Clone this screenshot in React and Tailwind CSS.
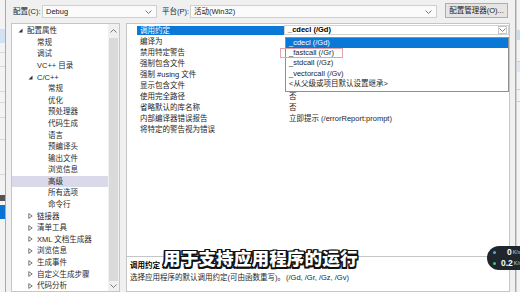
import React from "react";

const ui = "font-['Liberation_Sans','Noto_Sans_CJK_SC',sans-serif] text-[7.5px]";

const tree = [
  { t: "配置属性", lvl: 0, tri: "open" },
  { t: "常规", lvl: 1 },
  { t: "调试", lvl: 1 },
  { t: "VC++ 目录", lvl: 1 },
  { t: "C/C++", lvl: 1, tri: "open" },
  { t: "常规", lvl: 2 },
  { t: "优化", lvl: 2 },
  { t: "预处理器", lvl: 2 },
  { t: "代码生成", lvl: 2 },
  { t: "语言", lvl: 2 },
  { t: "预编译头", lvl: 2 },
  { t: "输出文件", lvl: 2 },
  { t: "浏览信息", lvl: 2 },
  { t: "高级", lvl: 2, sel: true },
  { t: "所有选项", lvl: 2 },
  { t: "命令行", lvl: 2 },
  { t: "链接器", lvl: 1, tri: "closed" },
  { t: "清单工具", lvl: 1, tri: "closed" },
  { t: "XML 文档生成器", lvl: 1, tri: "closed" },
  { t: "浏览信息", lvl: 1, tri: "closed" },
  { t: "生成事件", lvl: 1, tri: "closed" },
  { t: "自定义生成步骤", lvl: 1, tri: "closed" },
  { t: "代码分析", lvl: 1, tri: "closed" },
];

const indent = { 0: "pl-[6px]", 1: "pl-[16px]", 2: "pl-[27px]" };

const props = [
  ["调用约定", null],
  ["编译为", ""],
  ["禁用特定警告", ""],
  ["强制包含文件", ""],
  ["强制 #using 文件", ""],
  ["显示包含文件", ""],
  ["使用完全路径", "否"],
  ["省略默认的库名称", "否"],
  ["内部编译器错误报告", "立即提示 (/errorReport:prompt)"],
  ["将特定的警告视为错误", ""],
];

const options = ["_cdecl (/Gd)", "_fastcall (/Gr)", "_stdcall (/Gz)", "_vectorcall (/Gv)", "<从父级或项目默认设置继承>"];

function Chevron({ up = false, className = "" }) {
  return (
    <svg width="7" height="4" viewBox="0 0 7 4" className={className}>
      <path d={up ? "M0.5 3.5 L3.5 0.5 L6.5 3.5" : "M0.5 0.5 L3.5 3.5 L6.5 0.5"} fill="none" stroke="#6b6b6b" strokeWidth="0.9" />
    </svg>
  );
}

function Triangle({ kind }) {
  if (kind === "open")
    return (
      <svg width="5" height="5" viewBox="0 0 5 5">
        <path d="M4.5 0.5 L4.5 4.5 L0.5 4.5 Z" fill="#333" />
      </svg>
    );
  if (kind === "closed")
    return (
      <svg width="5" height="6" viewBox="0 0 5 6">
        <path d="M0.8 0.6 L4.2 3 L0.8 5.4 Z" fill="none" stroke="#555" strokeWidth="0.8" />
      </svg>
    );
  return null;
}

function Combo({ text, className }) {
  return (
    <div className={`h-[13px] bg-[#fbfbfb] border border-[#cfcfcf] flex items-center pl-[3px] pr-[4px] ${className}`}>
      <span className="flex-1 text-[#222]">{text}</span>
      <Chevron />
    </div>
  );
}

export default function App() {
  return (
    <div className={`w-[520px] h-[292px] overflow-hidden relative flex bg-[#f0f0f0] text-[#1e1e1e] ${ui}`}>
      {/* window behind, left edge */}
      <div className="w-[5px] flex flex-col bg-[#f3f3f3]">
        <div className="h-[29px]" />
        <div className="h-[14px] bg-[#d3e2f3]" />
        <div className="h-[10px] border-b border-[#d8d8d8]" />
        <div className="h-[14px] border-b border-[#d8d8d8]" />
        <div className="h-[25px] border-b border-[#d8d8d8]" />
        <div className="h-[11px] border-b border-[#d8d8d8]" />
        <div className="h-[15px] border-b border-[#d8d8d8]" />
        <div className="h-[22px] border-b border-[#d8d8d8]" />
        <div className="h-[35px] border-b border-[#d8d8d8]" />
        <div className="h-[20px]" />
        <div className="h-[6px] bg-[#555]" />
        <div className="h-[4px]" />
        <div className="h-[14px] bg-[#0a74d4]" />
        <div className="flex-1" />
      </div>

      {/* property dialog */}
      <div className="flex-1 flex flex-col border-x border-[#a9a9a9] pl-[5px] pr-[5px]">
        <div className="h-[23px] flex items-center pl-[2px]">
          <span className="w-[29px]">配置(C):</span>
          <Combo text="Debug" className="w-[115px]" />
          <span className="w-[28px] ml-[5px]">平台(P):</span>
          <Combo text="活动(Win32)" className="w-[247px]" />
          <div className="ml-[8px] w-[63px] h-[15px] -mt-[2px] border border-[#adadad] bg-[#e5e5e5] flex items-center justify-center">
            配置管理器(O)...
          </div>
        </div>

        <div className="flex-1 flex gap-[6px] min-h-0">
          {/* configuration tree */}
          <div className="w-[109px] bg-white border border-[#c6c6c6] flex">
            <div className="flex-1 pt-[1px]">
              {tree.map((n, i) => (
                <div
                  key={i}
                  className={`h-[11.6px] flex items-center ${indent[n.lvl]} ${n.sel ? "bg-[#d9d9ea]" : ""}`}
                >
                  <span className="w-[9px] flex items-center">
                    <Triangle kind={n.tri} />
                  </span>
                  <span className="text-[#2a2a2a] whitespace-nowrap">{n.t}</span>
                </div>
              ))}
            </div>
            <div className="w-[11px] flex flex-col bg-[#f0f0f0]">
              <div className="h-[14px] flex items-center justify-center">
                <Chevron up />
              </div>
              <div className="flex-1 mx-[1px] bg-[#dadada]" />
              <div className="h-[10px] flex items-center justify-center">
                <Chevron />
              </div>
            </div>
          </div>

          {/* property grid + description */}
          <div className="flex-1 flex flex-col">
            <div className="h-[234px] bg-white border border-[#c6c6c6] pt-[1px] pl-[10px]">
              {props.map(([name, value], i) => (
                <div key={i} className="h-[11px] flex">
                  <div className="w-[147px] flex items-center">
                    <div
                      className={`h-[9px] w-full flex items-center pl-[3px] whitespace-nowrap ${
                        i === 0 ? "bg-[#0a78d7] text-white" : "text-[#1e1e1e]"
                      }`}
                    >
                      {name}
                    </div>
                  </div>
                  <div className="flex-1 relative flex items-center pl-[5px]">
                    {value === null ? (
                      <>
                        <div className="absolute left-0 right-0 top-[0px] h-[10px] bg-white border border-[#d2d2d2] flex items-center pl-[3px] pr-[1px]">
                          <span className="flex-1 font-bold text-black">_cdecl (/Gd)</span>
                          <span className="w-[9px] h-[8px] border border-[#c8c8c8] flex items-center justify-center">
                            <Chevron />
                          </span>
                        </div>
                        <div className="absolute left-[1px] right-0 top-[11.5px] z-10 bg-white border border-[#8f8f8f] pb-[3px]">
                          {options.map((o, k) => (
                            <div
                              key={k}
                              className={`h-[10.2px] flex items-center pl-[3px] ${k === 0 ? "bg-[#0a78d7] text-white" : "text-[#1e1e1e]"}`}
                            >
                              {o}
                            </div>
                          ))}
                          <div className="absolute left-[-6px] top-[10.5px] w-[63px] h-[10px] border border-[#e3a3ab]" />
                        </div>
                      </>
                    ) : (
                      <span className="text-[#1e1e1e]">{value}</span>
                    )}
                  </div>
                </div>
              ))}
            </div>
            <div className="flex-1 bg-white border-x border-b border-[#c6c6c6] pt-[3px] pl-[3px] leading-[12px]">
              <div className="font-bold text-black">调用约定</div>
              <div className="flex text-[#1e1e1e]">
                <span className="w-[156px]">选择应用程序的默认调用约定(可由函数重写)。</span>
                <span>(/Gd, /Gr, /Gz, /Gv)</span>
              </div>
            </div>
          </div>
        </div>
      </div>

      {/* window behind, right edge */}
      <div className="w-[4px] flex flex-col bg-[#f3f3f3] border-l border-[#d0d0d0]">
        <div className="h-[30px]" />
        <div className="h-[10px] bg-[#c9dcf1]" />
        <div className="h-[22px] border-b border-[#cfcfcf]" />
        <div className="h-[10px] bg-[#dce8f5]" />
        <div className="h-[18px] border-b border-[#cfcfcf]" />
        <div className="h-[12px] border-b border-[#cfcfcf]" />
        <div className="flex-1" />
      </div>

      {/* subtitle caption */}
      <div className="absolute left-[163px] top-[248px] font-['Noto_Sans_CJK_SC',sans-serif] font-black text-[17.6px] leading-[20px] tracking-[0.1px] text-white [text-shadow:-1.5px_-1.5px_0_#111,1.5px_-1.5px_0_#111,-1.5px_1.5px_0_#111,1.5px_1.5px_0_#111,0_1.5px_0_#111,0_-1.5px_0_#111,1.5px_0_0_#111,-1.5px_0_0_#111]">
        用于支持应用程序的运行
      </div>

      {/* network speed pill */}
      <div className="absolute left-[487px] top-[246px] w-[40px] h-[24px] rounded-l-full bg-[#1f272d] flex flex-col justify-center pl-[6px] gap-[1px] font-['Liberation_Sans',sans-serif] font-bold">
        <div className="flex items-center h-[10px]">
          <span className="w-[3px] h-[3px] rounded-full bg-[#5aa8e6]" />
          <span className="ml-[11px] text-[8.5px] text-white">0</span>
          <span className="ml-[1px] text-[5px] text-[#9aa4aa]">K/s</span>
        </div>
        <div className="flex items-center h-[10px]">
          <span className="w-[3px] h-[3px] rounded-full bg-[#4fc27a]" />
          <span className="ml-[5px] text-[8.5px] text-white">0.2</span>
          <span className="ml-[1px] text-[5px] text-[#9aa4aa]">K/s</span>
        </div>
      </div>
    </div>
  );
}
